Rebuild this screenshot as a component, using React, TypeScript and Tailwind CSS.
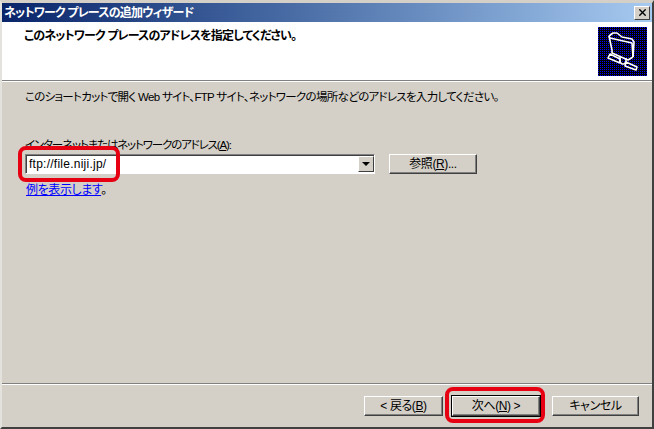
import React from 'react';
import { X } from 'lucide-react';

const font = "font-['Liberation_Sans','Noto_Sans_CJK_JP',sans-serif] [font-feature-settings:'palt']";

const WinButton = ({ children, className = '' }: { children: React.ReactNode; className?: string }) => (
  <div className={`flex h-[20px] items-center justify-center border border-t-white border-l-white border-r-[#404040] border-b-[#404040] bg-[#d4d0c8] text-[12px] leading-none tracking-[-0.4px] text-black shadow-[inset_-1px_-1px_0_#808080] ${className}`}>
    {children}
  </div>
);

// dithered wizard icon: black with sparse blue dots, white folder/network drawing
const WizardIcon = () => (
  <svg viewBox="0 0 49 49" width="49" height="49" fill="none" className="shrink-0">
    <rect width="49" height="49" fill="#000" />
    {Array.from({ length: 25 }).map((_, i) => (
      <line key={i} x1="0" y1={i * 2 + 0.5} x2="49" y2={i * 2 + 0.5} stroke="#0000ff" strokeDasharray="1 1" />
    ))}
    <g stroke="#fff" strokeWidth="1.6" strokeLinejoin="round">
      <path d="M11 9l4 -3h4l5 4 10 2 2 3 -1 15" />
      <path d="M11 9l1 2 22 5 1 14" />
      <path d="M11 9l3 14v3l16 7 5 -3" />
      <path d="M22 30v5l2 2h2l2 -2v-4" />
      <path d="M12 27l10 5v4l-12 -5z" />
      <path d="M28 35l11 5 -1 3 -11 -4z" />
    </g>
  </svg>
);

const App = () => {
  return (
    <div className={`relative flex h-[429px] w-[654px] flex-col overflow-hidden border-t-[3px] border-r-[2px] border-b-[2px] border-l-[2px] border-t-[#d4d0c8] border-r-[#404040] border-b-[#404040] border-l-[#e4e2dc] bg-[#d4d0c8] ${font}`}>
      {/* title bar */}
      <div className="flex h-[19px] shrink-0 items-center justify-between bg-gradient-to-r from-[#0a246a] to-[#a6caf0] pr-[2px] pl-[2px]">
        <span className="text-[12px] leading-none font-bold tracking-[-0.8px] text-white">ネットワーク プレースの追加ウィザード</span>
        <div className="flex h-[14px] w-[16px] items-center justify-center border border-t-white border-l-white border-r-[#404040] border-b-[#404040] bg-[#d4d0c8]">
          <X size={11} strokeWidth={3} className="text-black" />
        </div>
      </div>

      {/* header */}
      <div className="flex h-[58px] shrink-0 justify-between bg-white pt-[5px] pr-[5px] pl-[22px]">
        <span className="pt-[3px] text-[12px] leading-none font-bold tracking-[-0.85px] text-black">このネットワーク プレースのアドレスを指定してください。</span>
        <WizardIcon />
      </div>
      <div className="border-t border-b border-t-[#808080] border-b-white" />

      {/* body */}
      <div className="flex flex-1 flex-col pl-[23px] text-black">
        <p className="mt-[8px] text-[11.5px] leading-[14px] tracking-[-0.7px]">このショートカットで開く Web サイト、FTP サイト、ネットワークの場所などのアドレスを入力してください。</p>
        <p className="mt-[34px] text-[11.5px] leading-[14px] tracking-[-1.15px]">インターネットまたはネットワークのアドレス(<span className="underline">A</span>):</p>
        <div className="mt-[2px] flex items-center">
          <div className="flex h-[20px] w-[350px] items-center justify-between border border-t-[#808080] border-l-[#808080] border-r-white border-b-white bg-white shadow-[inset_1px_1px_0_#404040]">
            <span className="pl-[3px] text-[12px] leading-none tracking-[0.25px] text-black">ftp://file.niji.jp/</span>
            <div className="flex h-[16px] w-[16px] items-center justify-center border border-t-white border-l-white border-r-[#404040] border-b-[#404040] bg-[#d4d0c8]">
              <div className="h-0 w-0 border-x-[4px] border-t-[4px] border-x-transparent border-t-black" />
            </div>
          </div>
          <WinButton className="ml-[14px] w-[88px]">参照(<span className="underline">R</span>)...</WinButton>
        </div>
        <p className="mt-[9px] pl-[1px] text-[12px] leading-[14px] tracking-[-0.4px]"><span className="text-[#0000ff] underline">例を表示します</span>。</p>

        {/* footer */}
        <div className="mt-auto flex h-[44px] flex-col">
          <div className="-ml-[23px] border-t border-b border-t-[#808080] border-b-white" />
          <div className="mt-[11px] flex justify-end gap-[9px] pr-[13px]">
            <WinButton className="w-[79px]">&lt; 戻る(<span className="underline">B</span>)</WinButton>
            <WinButton className="mr-[3px] w-[88px] outline outline-1 outline-black">次へ(<span className="underline">N</span>) &gt;</WinButton>
            <WinButton className="w-[87px]">キャンセル</WinButton>
          </div>
        </div>
      </div>

      {/* red annotations */}
      <div className="absolute top-[143px] left-[16px] h-[36px] w-[102px] rounded-[8px] border-[4px] border-[#e60012]" />
      <div className="absolute top-[384px] left-[443px] h-[36px] w-[100px] rounded-[8px] border-[4px] border-[#e60012]" />
    </div>
  );
};

export default App;
